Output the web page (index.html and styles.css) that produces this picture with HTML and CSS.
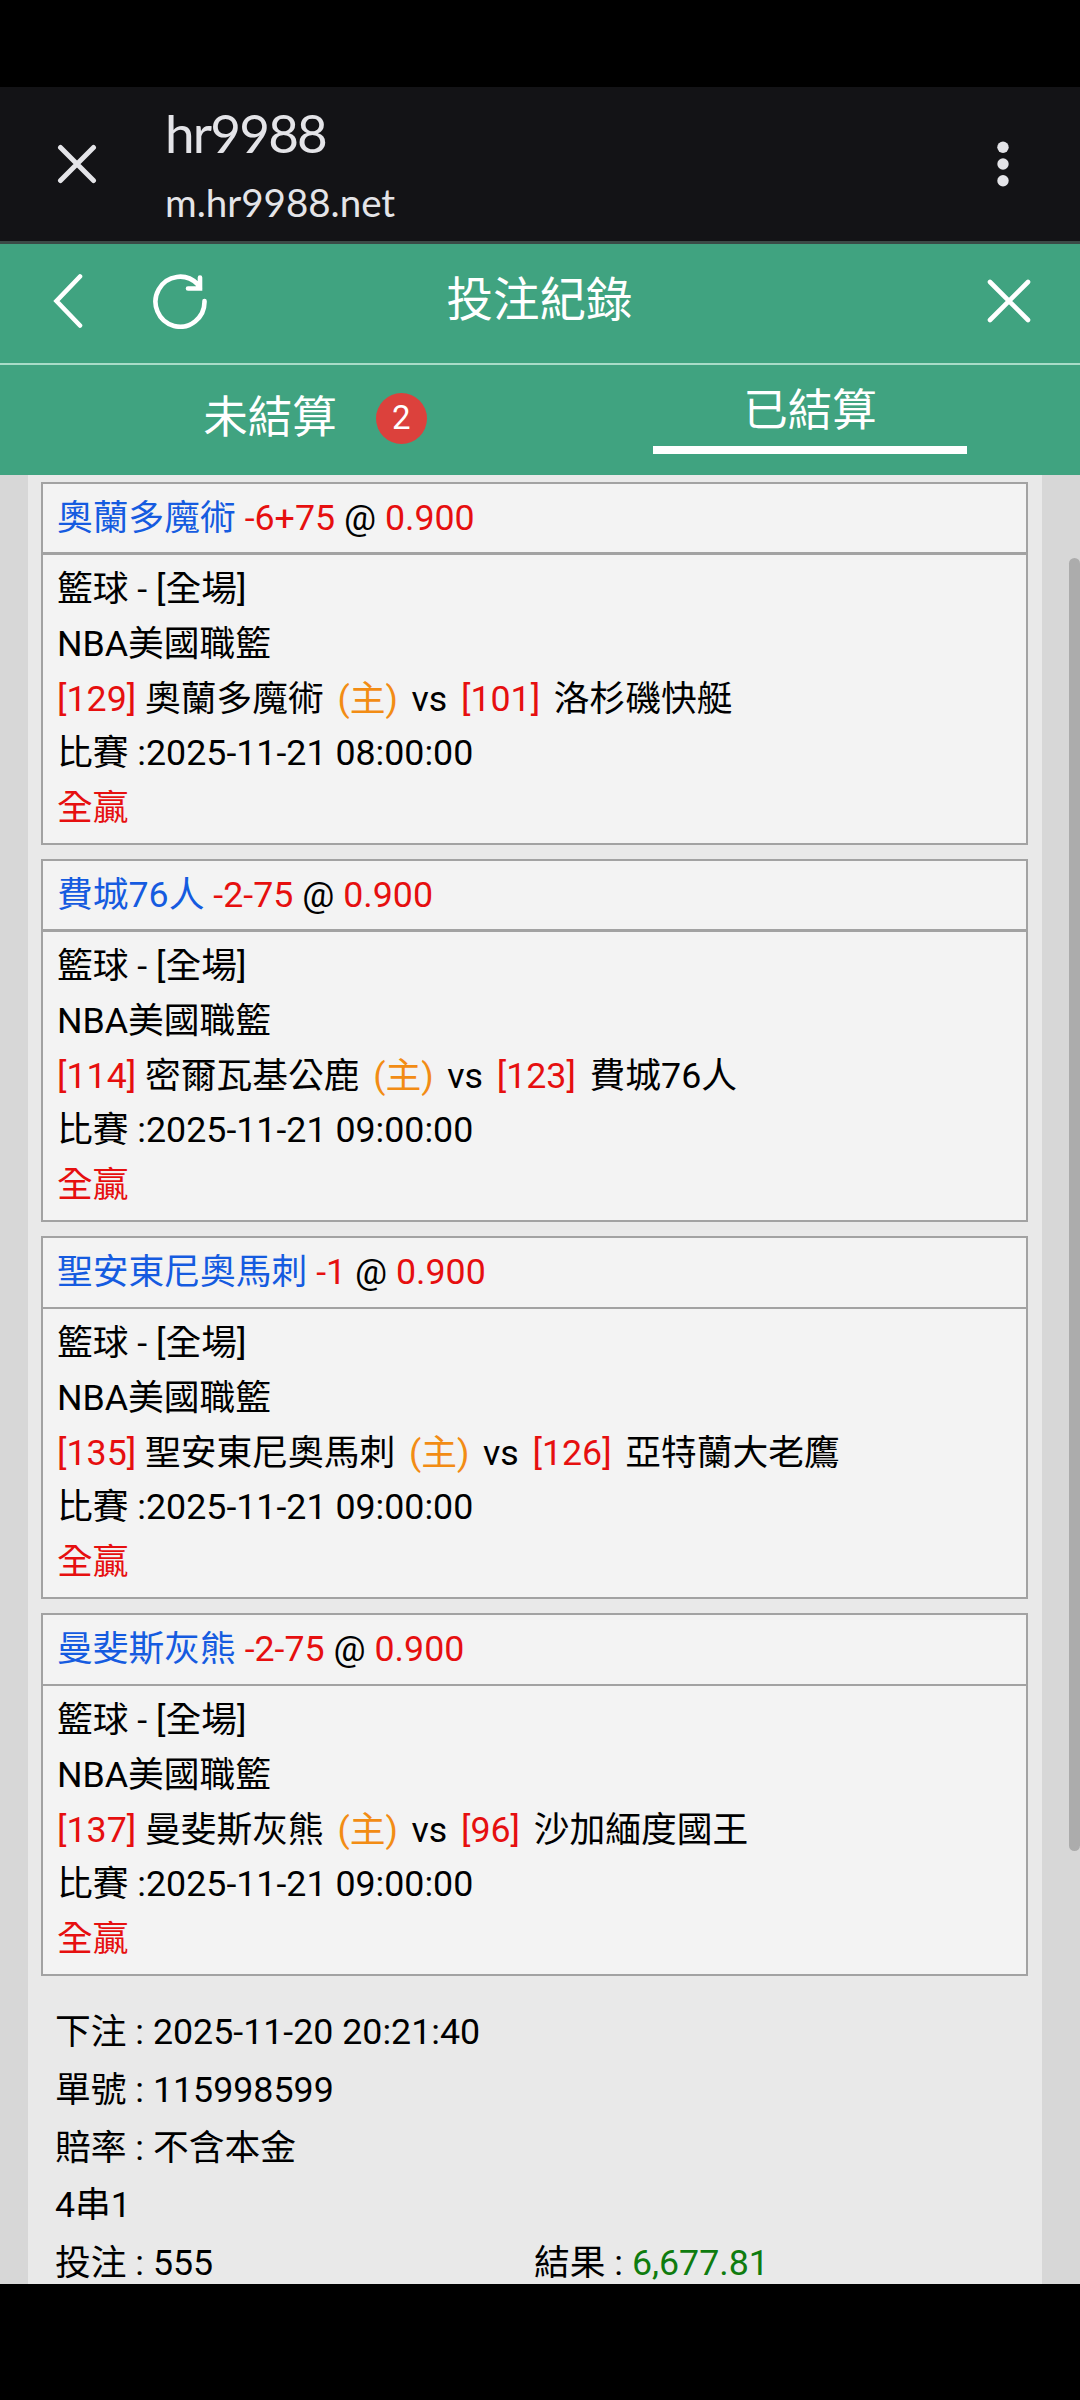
FILE: index.html
```
<!DOCTYPE html>
<html lang="zh-Hant">
<head>
<meta charset="utf-8">
<title>投注紀錄</title>
<link rel="stylesheet" href="styles.css">
</head>
<body>
<div class="screen">
  <header class="browser-bar">
    <svg class="browser-close" viewBox="0 0 40 40"><path d="M3.5 3.5 36.500 36.500M36.500 3.500 3.500 36.500"/></svg>
    <div class="browser-titles">
      <div class="page-name">hr9988</div>
      <div class="page-url">m.hr9988.net</div>
    </div>
    <svg class="browser-menu" viewBox="0 0 12 48"><circle cx="6" cy="7.300" r="5.700"/><circle cx="6" cy="24" r="5.700"/><circle cx="6" cy="40.700" r="5.700"/></svg>
  </header>
  <nav class="title-bar">
    <svg class="icon back" viewBox="0 0 30 54"><path d="M27 2.500 3.500 27 27 51.500"/></svg>
    <svg class="icon refresh" viewBox="0 0 56 56"><path d="M52.500 28A24.500 25 0 1 1 45.500 11.200L48 15M48 4.500V15.500H36"/></svg>
    <h1 class="title">投注紀錄</h1>
    <svg class="icon close" viewBox="0 0 44 44"><path d="M3 3 41 41M41 3 3 41"/></svg>
  </nav>
  <div class="tabs">
    <div class="tab"><span class="tab-label">未結算</span><span class="badge">2</span></div>
    <div class="tab"><span class="tab-active">已結算</span></div>
  </div>
  <main class="viewport">
    <div class="sheet">
      <section class="bet">
        <div class="bet-head"><span class="team">奧蘭多魔術</span> <span class="red">-6+75</span> @ <span class="red">0.900</span></div>
        <div class="bet-body">
          <p>籃球 - [全場]</p>
          <p>NBA美國職籃</p>
          <p><span class="red">[129]</span> 奧蘭多魔術 <span class="home">(主)</span> vs <span class="red away">[101]</span> 洛杉磯快艇</p>
          <p>比賽 :2025-11-21 08:00:00</p>
          <p class="red">全贏</p>
        </div>
      </section>
      <section class="bet">
        <div class="bet-head"><span class="team">費城76人</span> <span class="red">-2-75</span> @ <span class="red">0.900</span></div>
        <div class="bet-body">
          <p>籃球 - [全場]</p>
          <p>NBA美國職籃</p>
          <p><span class="red">[114]</span> 密爾瓦基公鹿 <span class="home">(主)</span> vs <span class="red away">[123]</span> 費城76人</p>
          <p>比賽 :2025-11-21 09:00:00</p>
          <p class="red">全贏</p>
        </div>
      </section>
      <section class="bet thin">
        <div class="bet-head"><span class="team">聖安東尼奧馬刺</span> <span class="red">-1</span> @ <span class="red">0.900</span></div>
        <div class="bet-body">
          <p>籃球 - [全場]</p>
          <p>NBA美國職籃</p>
          <p><span class="red">[135]</span> 聖安東尼奧馬刺 <span class="home">(主)</span> vs <span class="red away">[126]</span> 亞特蘭大老鷹</p>
          <p>比賽 :2025-11-21 09:00:00</p>
          <p class="red">全贏</p>
        </div>
      </section>
      <section class="bet thin">
        <div class="bet-head"><span class="team">曼斐斯灰熊</span> <span class="red">-2-75</span> @ <span class="red">0.900</span></div>
        <div class="bet-body">
          <p>籃球 - [全場]</p>
          <p>NBA美國職籃</p>
          <p><span class="red">[137]</span> 曼斐斯灰熊 <span class="home">(主)</span> vs <span class="red away">[96]</span> 沙加緬度國王</p>
          <p>比賽 :2025-11-21 09:00:00</p>
          <p class="red">全贏</p>
        </div>
      </section>
      <section class="summary">
        <p>下注 : 2025-11-20 20:21:40</p>
        <p>單號 : 115998599</p>
        <p>賠率 : 不含本金</p>
        <p>4串1</p>
        <div class="totals"><p>投注 : 555</p><p>結果 : <span class="green">6,677.81</span></p></div>
      </section>
    </div>
    <div class="scrollbar"></div>
  </main>
</div>
</body>
</html>
```
FILE: styles.css
```
* { box-sizing: border-box; margin: 0; padding: 0; }
body { background: #000; }
svg { display: block; flex: none; fill: none; stroke-linecap: round; }
.screen {
  display: flex;
  flex-direction: column;
  width: 1080px;
  height: 2400px;
  padding: 87px 0 116px;
  background: #000;
  color: #000;
  font-family: Roboto, "Noto Sans CJK TC", sans-serif;
  font-size: 35.750px;
  overflow: hidden;
}

/* Browser bar */
.browser-bar {
  display: flex;
  align-items: center;
  flex: none;
  height: 157px;
  padding: 0 71px 0 57px;
  background: #131316;
  border-bottom: 3px solid #3b4a46;
  color: #e4e4e8;
}
.browser-close { width: 40px; height: 40px; stroke: #e4e4e8; stroke-width: 5px; }
.browser-titles { flex: 1; padding: 7px 0 0 68px; font-family: Lato, sans-serif; }
.page-name { font-size: 53px; line-height: 68px; letter-spacing: -1.800px; }
.page-url { font-size: 38.500px; line-height: 70px; }
.browser-menu { width: 12px; height: 48px; fill: #e4e4e8; }

/* Title bar */
.title-bar {
  display: flex;
  align-items: center;
  flex: none;
  height: 121px;
  padding: 0 49px 5px 53px;
  background: #40a380;
  border-bottom: 2px solid #a9dcc8;
  color: #fff;
}
.icon { stroke: #fff; stroke-width: 4.600px; }
.back { width: 30px; height: 54px; }
.refresh { width: 56px; height: 56px; margin-left: 69px; }
.close { width: 44px; height: 44px; }
.title { flex: 1; padding: 0 116px 2px 0; text-align: center; font-size: 46.500px; font-weight: 400; line-height: 60px; }

/* Tabs */
.tabs { display: flex; flex: none; height: 110px; background: #40a380; color: #fff; font-size: 44.500px; }
.tab { width: 50%; display: flex; justify-content: center; align-items: center; gap: 39px; }
.tab:first-child { padding: 0 0 3px 90px; }
.tab-label { padding-bottom: 2px; line-height: 62px; }
.tab:last-child { align-items: flex-start; }
.badge {
  width: 51px;
  height: 51px;
  border-radius: 50%;
  background: #dc413c;
  font-size: 33px;
  line-height: 50px;
  text-align: center;
}
.tab-active { width: 314px; height: 75px; margin-top: 14px; border-bottom: 8px solid #fff; line-height: 64px; text-align: center; }

/* Betting slips */
.viewport { position: relative; flex: 1; min-height: 0; overflow: hidden; padding: 0 38px 0 28px; background: #d7d7d7; }
.sheet { min-height: 100%; padding: 7px 14px 0 13px; background: #e9e9e9; }
.bet { height: 363px; margin-bottom: 14px; border: 2px solid #a2a2a2; background: #f3f3f3; white-space: nowrap; }
.bet-head { height: 71px; padding: 7px 14px 0; border-bottom: 3px solid #a2a2a2; line-height: 55px; }
.bet-body { padding: 7px 14px 0; line-height: 54.800px; }
.thin .bet-head { border-bottom-width: 2px; }
.team { color: #155be0; }
.red { color: #e60f0f; }
.home { margin: 0 4.750px; color: #f28c14; }
.away { margin: 0 4.750px; }
.green { color: #0f7c0f; }
.summary { padding: 14px 14px 0; line-height: 57.750px; white-space: nowrap; }
.totals { display: grid; grid-template-columns: 479px 1fr; }
.scrollbar { position: absolute; top: 83px; right: 0; width: 11px; height: 1293px; border-radius: 5.500px; background: #acacac; }
```
